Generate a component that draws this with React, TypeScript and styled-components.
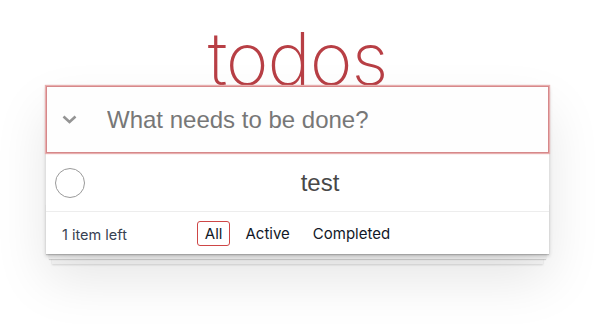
import { useState } from 'react';
import styled, { createGlobalStyle } from 'styled-components';

const GlobalStyle = createGlobalStyle`
  html, body {
    margin: 0;
    padding: 0;
    background: #fff;
    min-height: 100vh;
  }
  body {
    font-family: "Liberation Sans", Arial, sans-serif;
    color: #111;
  }
`;

const Page = styled.div`
  position: relative;
  z-index: 0;
  width: 503px;
  padding: 22px 0 0 46px;
`;

const Title = styled.h1`
  margin: 0 0 -9px;
  text-align: center;
  font-family: Inter, "Liberation Sans", sans-serif;
  font-size: 73px;
  line-height: 73px;
  font-weight: 150;
  color: #b83f45;
  letter-spacing: -1px;
`;

const Card = styled.section`
  position: relative;
  background: #fff;
  box-shadow: 0 2px 4px 0 rgba(0, 0, 0, 0.2), 0 25px 50px 0 rgba(0, 0, 0, 0.1);
`;

const Header = styled.div`
  position: relative;
  display: flex;
  align-items: center;
  height: 65px;
  border: 1px solid #d6888a;
  box-shadow: 0 0 1px 1px #e8aeae;
  background: rgba(0, 0, 0, 0.003);
`;

const ToggleAll = styled.button`
  display: flex;
  align-items: center;
  justify-content: center;
  width: 60px;
  height: 100%;
  padding: 0 15px 0 0;
  border: 0;
  background: none;
`;

const NewTodo = styled.input`
  flex: 1;
  border: 0;
  outline: none;
  background: transparent;
  padding: 0 16px 0 0;
  font-family: "Liberation Sans", Arial, sans-serif;
  font-size: 24px;
  color: #4d4d4d;

  &::placeholder {
    color: #777;
  }
`;

const TodoList = styled.ul`
  margin: 0;
  padding: 0;
`;

const TodoRow = styled.li`
  display: flex;
  align-items: center;
  height: 58px;
  border-bottom: 1px solid #ededed;
  list-style: none;
`;

const Toggle = styled.span`
  width: 30px;
  height: 30px;
  margin: 2px 0 0 9px;
  box-sizing: border-box;
  border: 1px solid #9a9a9a;
  border-radius: 50%;
  flex-shrink: 0;
`;

const Label = styled.label`
  flex: 1;
  padding: 2px 15px 0 21px;
  text-align: center;
  font-size: 24px;
  color: #484848;
`;

const Footer = styled.footer`
  position: relative;
  display: grid;
  grid-template-columns: 1fr auto 1fr;
  align-items: center;
  height: 42px;
  padding: 0 16px;
  font-family: Inter, "Liberation Sans", sans-serif;
  font-size: 14px;
  color: #111827;

  &::before {
    content: '';
    position: absolute;
    left: 0;
    right: 0;
    bottom: 0;
    height: 50px;
    z-index: -1;
    box-shadow: 0 1px 1px rgba(0, 0, 0, 0.15), 0 8px 0 -3px #f8f8f8,
      0 9px 1px -3px rgba(0, 0, 0, 0.15), 0 16px 0 -6px #f8f8f8,
      0 17px 2px -6px rgba(0, 0, 0, 0.15);
  }
`;

const Count = styled.span`
  color: #374151;
  padding-top: 2px;
  font-size: 14.5px;
`;

const Filters = styled.ul`
  display: flex;
  gap: 7px;
  margin: 0;
  padding: 0;
  list-style: none;
`;

const FilterLink = styled.a<{ $selected: boolean }>`
  display: block;
  padding: 3px 7px;
  border: 1px solid ${({ $selected }) => ($selected ? '#ce4646' : 'transparent')};
  border-radius: 3px;
  font-size: 15px;
  font-weight: 400;
  color: #111827;
  text-decoration: none;
  line-height: 17px;
`;

const filters = ['All', 'Active', 'Completed'];

export default function App() {
  const [filter, setFilter] = useState('All');

  return (
    <>
      <GlobalStyle />
      <Page>
        <Title>todos</Title>
        <Card>
          <Header>
            <ToggleAll aria-label="Toggle all">
              <svg width="15" height="9" viewBox="0 0 15 9">
                <path d="M1.5 1.5 L7.5 7 L13.5 1.5" fill="none" stroke="#949494" strokeWidth="2.6" />
              </svg>
            </ToggleAll>
            <NewTodo placeholder="What needs to be done?" />
          </Header>
          <TodoList>
            <TodoRow>
              <Toggle />
              <Label>test</Label>
            </TodoRow>
          </TodoList>
          <Footer>
            <Count>1 item left</Count>
            <Filters>
              {filters.map((f) => (
                <li key={f}>
                  <FilterLink href="#" $selected={filter === f} onClick={() => setFilter(f)}>
                    {f}
                  </FilterLink>
                </li>
              ))}
            </Filters>
            <span />
          </Footer>
        </Card>
      </Page>
    </>
  );
}
